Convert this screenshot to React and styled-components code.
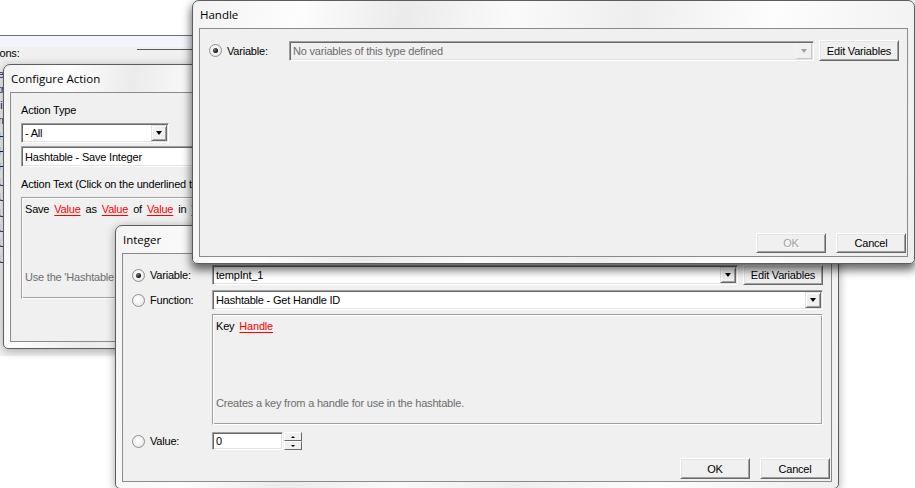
import React from "react";
import styled, { createGlobalStyle } from "styled-components";

const Global = createGlobalStyle`
  html, body { margin: 0; padding: 0; background: #fff; overflow: hidden; }
  body {
    font-family: "Liberation Sans", Arial, sans-serif;
    font-size: 11px;
    letter-spacing: -0.2px;
    color: #000;
  }
`;

const Desktop = styled.div`
  position: relative;
  width: 915px;
  height: 488px;
  overflow: hidden;
  background: #fff;
`;

/* ---------- window chrome ---------- */
const Win = styled.div`
  position: absolute;
  left: ${(p) => p.$x}px;
  top: ${(p) => p.$y}px;
  width: ${(p) => p.$w}px;
  height: ${(p) => p.$h}px;
  z-index: ${(p) => p.$z};
  box-sizing: border-box;
  display: flex;
  flex-direction: column;
  padding: 0 6px 6px;
  border: 1px solid #5d5d5d;
  border-radius: 7px 7px 5px 5px;
  background: linear-gradient(
    100deg,
    #f3f3f3 0%,
    #fdfdfd 14%,
    #ebebeb 28%,
    #fafafa 42%,
    #eeeeee 58%,
    #fdfdfd 76%,
    #efefef 100%
  );
  box-shadow: ${(p) => p.$shadow};
`;

const Title = styled.div`
  height: 27px;
  flex: none;
  display: flex;
  align-items: center;
  padding-left: 1px;
  font-family: "Open Sans", "Noto Sans", sans-serif;
  font-size: 11.5px;
  letter-spacing: 0;
  color: #000;
`;

const Client = styled.div`
  flex: 1;
  min-height: 0;
  box-sizing: border-box;
  border: 1px solid #8a8a8a;
  background: #f0f0f0;
  display: flex;
  flex-direction: column;
  padding: ${(p) => p.$pad};
  overflow: hidden;
`;

/* ---------- background window ---------- */
const BgWin = styled.div`
  position: absolute;
  left: -20px;
  top: 35px;
  width: 215px;
  height: 320px;
  z-index: 1;
  border-top: 1px solid #6e6e6e;
  background: #f0f0f0;
  display: flex;
  flex-direction: column;
`;

const BgBand = styled.div`
  height: 11px;
  background: #f2f5fa;
`;

const BgHeader = styled.div`
  height: 13px;
  display: flex;
  align-items: flex-start;
  padding-left: 2px;
`;

const BgRule = styled.div`
  margin-left: auto;
  margin-top: 2px;
  width: 58px;
  height: 1px;
  background: #5a5a5a;
`;

const BgList = styled.div`
  margin-top: 7px;
  padding-left: 18px;
  display: flex;
  flex-direction: column;
`;

const BgItem = styled.div`
  height: 15.4px;
  line-height: 15px;
  color: ${(p) => p.$c};
  white-space: nowrap;
`;

/* ---------- controls ---------- */
const Label = styled.div`
  line-height: 13px;
  margin-top: ${(p) => p.$mt || 0}px;
  white-space: nowrap;
`;

const FieldRow = styled.div`
  display: grid;
  grid-template-columns: 84px 1fr 80px;
  column-gap: 5px;
  align-items: center;
  padding-right: 8px;
  height: ${(p) => p.$h || 20}px;
  margin-top: ${(p) => p.$mt || 0}px;
`;

const RadioLabel = styled.div`
  display: flex;
  align-items: center;
  gap: 5px;
  padding-left: 9px;
  white-space: nowrap;
`;

const Radio = styled.span`
  width: 13px;
  height: 13px;
  flex: none;
  box-sizing: border-box;
  border-radius: 50%;
  border: 1px solid #8e8f8f;
  background: radial-gradient(circle at 40% 40%, #ffffff 0%, #f4f4f4 45%, #d9d9d9 100%);
  display: flex;
  align-items: center;
  justify-content: center;
  &::after {
    content: "";
    width: 5px;
    height: 5px;
    border-radius: 50%;
    background: ${(p) =>
      p.$checked ? "radial-gradient(circle at 35% 35%, #7a7a7a, #0a0a0a 70%)" : "transparent"};
  }
`;

const Field = styled.div`
  box-sizing: border-box;
  height: ${(p) => p.$h || 20}px;
  width: ${(p) => (p.$w ? `${p.$w}px` : "auto")};
  grid-column: ${(p) => p.$span || "auto"};
  display: flex;
  align-items: stretch;
  padding: 1px;
  background: ${(p) => (p.$disabled ? "#f0f0f0" : "#fff")};
  color: ${(p) => (p.$disabled ? "#6d6d6d" : "#000")};
  border: 1px solid;
  border-color: #a0a0a0 #fff #fff #a0a0a0;
  box-shadow: inset 1px 1px 0 #696969, inset -1px -1px 0 #e3e3e3;
  margin-top: ${(p) => p.$mt || 0}px;
`;

const FieldText = styled.span`
  flex: 1;
  display: flex;
  align-items: center;
  padding-left: 2px;
  white-space: nowrap;
  overflow: hidden;
`;

const DropBtn = styled.span`
  width: 16px;
  flex: none;
  box-sizing: border-box;
  display: flex;
  align-items: center;
  justify-content: center;
  background: #f0f0f0;
  border: 1px solid;
  border-color: ${(p) =>
    p.$disabled ? "#f4f4f4 #c8c8c8 #c8c8c8 #f4f4f4" : "#e3e3e3 #696969 #696969 #e3e3e3"};
  box-shadow: ${(p) =>
    p.$disabled ? "none" : "inset 1px 1px 0 #fff, inset -1px -1px 0 #a0a0a0"};
  &::after {
    content: "";
    border-left: 3.5px solid transparent;
    border-right: 3.5px solid transparent;
    border-top: 4px solid ${(p) => (p.$disabled ? "#a0a0a0" : "#000")};
  }
`;

const Btn = styled.button`
  box-sizing: border-box;
  width: ${(p) => p.$w}px;
  height: ${(p) => p.$h || 20}px;
  padding: 0;
  margin: 0;
  font-family: "Liberation Sans", Arial, sans-serif;
  font-size: 11px;
  letter-spacing: -0.2px;
  color: ${(p) => (p.$disabled ? "#a0a0a0" : "#000")};
  text-shadow: ${(p) => (p.$disabled ? "1px 1px 0 #fff" : "none")};
  background: #f0f0f0;
  border: 1px solid;
  border-color: #fff #696969 #696969 #fff;
  box-shadow: inset 1px 1px 0 #e3e3e3, inset -1px -1px 0 #a0a0a0;
`;

const ButtonBar = styled.div`
  margin-top: auto;
  display: flex;
  justify-content: flex-end;
  gap: 10px;
  padding-right: 1px;
`;

const Etched = styled.div`
  box-sizing: border-box;
  height: ${(p) => p.$h}px;
  width: ${(p) => (p.$w ? `${p.$w}px` : "auto")};
  margin: ${(p) => p.$m};
  padding: 5px 3px 14px;
  display: flex;
  flex-direction: column;
  justify-content: space-between;
  border: 1px solid;
  border-color: #a0a0a0 #fff #fff #a0a0a0;
  box-shadow: inset 1px 1px 0 #fff, inset -1px -1px 0 #a0a0a0;
`;

const Words = styled.div`
  display: flex;
  gap: 5px;
  line-height: 13px;
  white-space: nowrap;
`;

const Link = styled.span`
  color: #f00;
  text-decoration: underline;
  text-decoration-thickness: 1px;
  text-underline-offset: 2px;
`;

const Hint = styled.div`
  color: #6d6d6d;
  line-height: 13px;
  white-space: nowrap;
`;

const ValueGroup = styled.div`
  display: flex;
  align-items: center;
  gap: 1px;
`;

const Spin = styled.div`
  display: flex;
  flex-direction: column;
  width: 18px;
  height: 18px;
`;

const SpinBtn = styled.span`
  flex: 1;
  box-sizing: border-box;
  background: #f0f0f0;
  border: 1px solid;
  border-color: #fff #696969 #696969 #fff;
  display: flex;
  align-items: center;
  justify-content: center;
  &::after {
    content: "";
    border-left: 2px solid transparent;
    border-right: 2px solid transparent;
    ${(p) => (p.$up ? "border-bottom: 2px solid #000;" : "border-top: 2px solid #000;")}
  }
`;

const bgItems = [
  ["ev", "#1b1b6e"],
  ["tr", "#1b1b6e"],
  ["li", "#1b1b6e"],
  ["rn", "#1b1b6e"],
  ["Ha", "#1b1b6e"],
  ["Ha", "#1b1b6e"],
  ["Ha", "#1b1b6e"],
  ["Un", "#4a1d6a"],
  ["Un", "#4a1d6a"],
  ["Un", "#4a1d6a"],
  ["Un", "#4a1d6a"],
  ["Un", "#4a1d6a"],
  ["Un", "#4a1d6a"],
];

export default function App() {
  return (
    <>
      <Global />
      <Desktop>
        {/* background trigger editor window */}
        <BgWin>
          <BgBand />
          <BgHeader>
            <span>Actions:</span>
            <BgRule />
          </BgHeader>
          <BgList>
            {bgItems.map(([t, c], i) => (
              <BgItem key={i} $c={c}>
                {t}
              </BgItem>
            ))}
          </BgList>
        </BgWin>

        {/* Configure Action */}
        <Win $x={3} $y={64} $w={420} $h={285} $z={2} $shadow="0 2px 10px rgba(0,0,0,0.3)">
          <Title>Configure Action</Title>
          <Client $pad="11px 0 0 10px">
            <Label>Action Type</Label>
            <Field $w={148} $mt={6}>
              <FieldText>- All</FieldText>
              <DropBtn />
            </Field>
            <Field $w={390} $h={21} $mt={3}>
              <FieldText>Hashtable - Save Integer</FieldText>
            </Field>
            <Label $mt={11}>Action Text (Click on the underlined text to change its value):</Label>
            <Etched $h={102} $w={390} $m="6px 0 0 0">
              <Words>
                <span>Save</span>
                <Link>Value</Link>
                <span>as</span>
                <Link>Value</Link>
                <span>of</span>
                <Link>Value</Link>
                <span>in</span>
                <Link>Value</Link>
              </Words>
              <Hint>Use the 'Hashtable</Hint>
            </Etched>
          </Client>
        </Win>

        {/* Integer */}
        <Win $x={115} $y={225} $w={724} $h={264} $z={3} $shadow="0 2px 10px rgba(0,0,0,0.35)">
          <Title>Integer</Title>
          <Client $pad="11px 0 2px 0">
            <FieldRow>
              <RadioLabel>
                <Radio $checked />
                Variable:
              </RadioLabel>
              <Field>
                <FieldText>tempInt_1</FieldText>
                <DropBtn />
              </Field>
              <Btn $w={80}>Edit Variables</Btn>
            </FieldRow>
            <FieldRow $mt={5}>
              <RadioLabel>
                <Radio />
                Function:
              </RadioLabel>
              <Field $span="2 / 4">
                <FieldText>Hashtable - Get Handle ID</FieldText>
                <DropBtn />
              </Field>
            </FieldRow>
            <Etched $h={111} $m="4px 8px 0 89px">
              <Words>
                <span>Key</span>
                <Link>Handle</Link>
              </Words>
              <Hint>Creates a key from a handle for use in the hashtable.</Hint>
            </Etched>
            <FieldRow $mt={7} $h={18}>
              <RadioLabel>
                <Radio />
                Value:
              </RadioLabel>
              <ValueGroup>
                <Field $w={71} $h={18}>
                  <FieldText>0</FieldText>
                </Field>
                <Spin>
                  <SpinBtn $up />
                  <SpinBtn />
                </Spin>
              </ValueGroup>
            </FieldRow>
            <ButtonBar>
              <Btn $w={70} $h={21}>OK</Btn>
              <Btn $w={70} $h={21}>Cancel</Btn>
            </ButtonBar>
          </Client>
        </Win>

        {/* Handle */}
        <Win $x={192} $y={0} $w={723} $h={264} $z={4} $shadow="0 5px 10px 1px rgba(0,0,0,0.6)">
          <Title>Handle</Title>
          <Client $pad="11px 0 3px 0">
            <FieldRow>
              <RadioLabel>
                <Radio $checked />
                Variable:
              </RadioLabel>
              <Field $disabled>
                <FieldText>No variables of this type defined</FieldText>
                <DropBtn $disabled />
              </Field>
              <Btn $w={80} $h={21}>Edit Variables</Btn>
            </FieldRow>
            <ButtonBar>
              <Btn $w={70} $disabled>OK</Btn>
              <Btn $w={70}>Cancel</Btn>
            </ButtonBar>
          </Client>
        </Win>
      </Desktop>
    </>
  );
}
